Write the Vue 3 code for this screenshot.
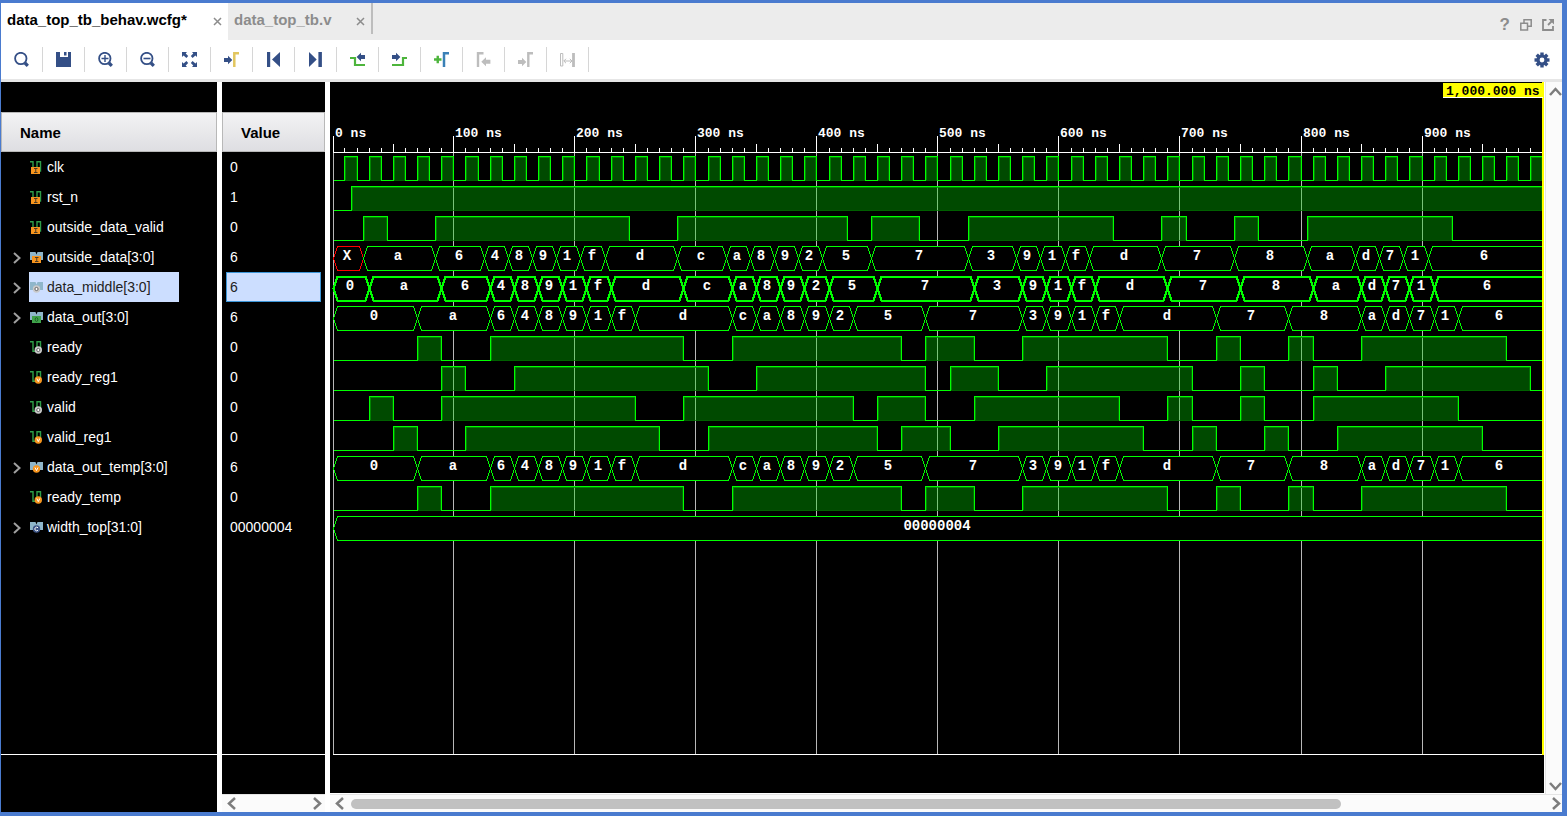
<script setup>
import { ref, computed, onMounted, onBeforeUnmount } from 'vue'

const tools = [
  { id: 'search', label: 'Find' },
  { id: 'save', label: 'Save waveform configuration' },
  { id: 'zoomin', label: 'Zoom in' },
  { id: 'zoomout', label: 'Zoom out' },
  { id: 'fit', label: 'Zoom fit' },
  { id: 'goto', label: 'Go to cursor' },
  { id: 'first', label: 'Go to time 0' },
  { id: 'last', label: 'Go to last time' },
  { id: 'prevedge', label: 'Previous transition' },
  { id: 'nextedge', label: 'Next transition' },
  { id: 'addmark', label: 'Add marker' },
  { id: 'prevmark', label: 'Previous marker', off: true },
  { id: 'nextmark', label: 'Next marker', off: true },
  { id: 'swap', label: 'Swap cursors', off: true }
]

const clk = Array.from({ length: 50 }, (_, i) => [i * 20 + 10, i * 20 + 20])
const readyPulses = [[70, 90], [130, 290], [330, 470], [490, 530], [570, 690], [730, 750], [790, 810], [850, 970]]
const outBus = [['0', 0], ['a', 70], ['6', 130], ['4', 150], ['8', 170], ['9', 190], ['1', 210], ['f', 230], ['d', 250], ['c', 330], ['a', 350], ['8', 370], ['9', 390], ['2', 410], ['5', 430], ['7', 490], ['3', 570], ['9', 590], ['1', 610], ['f', 630], ['d', 650], ['7', 730], ['8', 790], ['a', 850], ['d', 870], ['7', 890], ['1', 910], ['6', 930]]

const signals = [
  { name: 'clk', value: '0', badge: 'I', pulses: clk },
  { name: 'rst_n', value: '1', badge: 'I', pulses: [[15, 1010]] },
  { name: 'outside_data_valid', value: '0', badge: 'I', pulses: [[25, 45], [85, 245], [285, 425], [445, 485], [525, 645], [685, 705], [745, 765], [805, 925]] },
  { name: 'outside_data[3:0]', value: '6', badge: 'I', bus: [['X', 0], ['a', 25], ['6', 85], ['4', 125], ['8', 145], ['9', 165], ['1', 185], ['f', 205], ['d', 225], ['c', 285], ['a', 325], ['8', 345], ['9', 365], ['2', 385], ['5', 405], ['7', 445], ['3', 525], ['9', 565], ['1', 585], ['f', 605], ['d', 625], ['7', 685], ['8', 745], ['a', 805], ['d', 845], ['7', 865], ['1', 885], ['6', 905]] },
  { name: 'data_middle[3:0]', value: '6', badge: 'S', selected: true, bus: [['0', 0], ['a', 30], ['6', 90], ['4', 130], ['8', 150], ['9', 170], ['1', 190], ['f', 210], ['d', 230], ['c', 290], ['a', 330], ['8', 350], ['9', 370], ['2', 390], ['5', 410], ['7', 450], ['3', 530], ['9', 570], ['1', 590], ['f', 610], ['d', 630], ['7', 690], ['8', 750], ['a', 810], ['d', 850], ['7', 870], ['1', 890], ['6', 910]] },
  { name: 'data_out[3:0]', value: '6', badge: 'O', bus: outBus },
  { name: 'ready', value: '0', badge: 'S', pulses: readyPulses },
  { name: 'ready_reg1', value: '0', badge: 'V', pulses: [[90, 110], [150, 310], [350, 490], [510, 550], [590, 710], [750, 770], [810, 830], [870, 990]] },
  { name: 'valid', value: '0', badge: 'S', pulses: [[30, 50], [90, 250], [290, 430], [450, 490], [530, 650], [690, 710], [750, 770], [810, 930]] },
  { name: 'valid_reg1', value: '0', badge: 'V', pulses: [[50, 70], [110, 270], [310, 450], [470, 510], [550, 670], [710, 730], [770, 790], [830, 950]] },
  { name: 'data_out_temp[3:0]', value: '6', badge: 'V', bus: outBus },
  { name: 'ready_temp', value: '0', badge: 'V', pulses: readyPulses },
  { name: 'width_top[31:0]', value: '00000004', badge: 'C', bus: [['00000004', 0]] }
]

const canvas = ref(null)
const width = ref(1214)
const height = ref(711)
let observer
onMounted(() => {
  const measure = () => {
    width.value = canvas.value.clientWidth
    height.value = canvas.value.clientHeight
  }
  measure()
  observer = new ResizeObserver(measure)
  observer.observe(canvas.value)
})
onBeforeUnmount(() => observer.disconnect())

const endX = computed(() => width.value - 2)
const floorY = computed(() => height.value - 39)
// Column of pixels in which a time in ns falls.
const px = t => Math.min(endX.value, Math.max(3, Math.floor(2.85 + t * (width.value - 3.8) / 1000)))

const ticks = computed(() => Array.from({ length: 100 }, (_, i) => {
  const t = i * 10
  return { t, x: px(t), major: t % 100 === 0, h: t % 100 === 0 ? 16 : t % 50 === 0 ? 8 : 4 }
}))

const rows = computed(() => signals.map((s, i) => {
  const top = 74 + i * 30
  const bottom = top + 24
  if (s.pulses) {
    let d = `M3.5 ${bottom + 0.5}`
    const boxes = []
    for (const [a, b] of s.pulses) {
      const x1 = px(a), x2 = px(b)
      d += `H${x1 + 0.5}V${top + 0.5}H${x2 + 0.5}`
      if (b <= 1000) d += `V${bottom + 0.5}`
      if (b < 1000) d += `M${x2 + 0.5} ${bottom + 0.5}`
      boxes.push({ x: x1, w: x2 - x1 })
    }
    const last = s.pulses[s.pulses.length - 1][1]
    if (last < 1000) d += `H${endX.value}`
    d = d.replace(/^(M3\.5 [\d.]+)/, '$1')
    return { top, bottom, d, boxes }
  }
  const cells = s.bus.map(([v, t], k) => {
    const open = k === s.bus.length - 1
    const x1 = px(t) + 0.5
    const x2 = (open ? endX.value : px(s.bus[k + 1][1])) + 0.5
    const t1 = top + 0.5, b1 = bottom + 0.5, m = top + 12.5
    const d = open
      ? `M${x2} ${t1}H${x1 + 4}L${x1} ${m}L${x1 + 4} ${b1}H${x2}`
      : `M${x1} ${m}L${x1 + 4} ${t1}H${x2 - 4}L${x2} ${m}L${x2 - 4} ${b1}H${x1 + 4}Z`
    return { v, d, cx: Math.floor((x1 + x2) / 2) - 1, bad: v === 'X' }
  })
  return { top, bottom, cells, bold: s.selected }
}))
</script>

<template>
  <div class="window">
    <header class="tabs">
      <div class="tab active"><span>data_top_tb_behav.wcfg*</span>
        <button class="close" aria-label="Close data_top_tb_behav.wcfg"><svg width="9" height="9"><path d="M1 1l7 7M8 1L1 8" /></svg></button>
      </div>
      <div class="tab"><span>data_top_tb.v</span>
        <button class="close" aria-label="Close data_top_tb.v"><svg width="9" height="9"><path d="M1 1l7 7M8 1L1 8" /></svg></button>
      </div>
      <div class="window-tools">
        <button class="help" aria-label="Help">?</button>
        <button aria-label="Restore"><svg width="12" height="12" class="line"><path d="M4 3.5V.8h7.2v6.4H8M.8 4.2h6.7v6.9H.8z" /></svg></button>
        <button aria-label="Float"><svg width="12" height="12" class="line"><path d="M4.5 1H1v10h10V7" stroke-width="1.8" /><path d="M6 6l4-4" stroke-width="1.8" /><path d="M6.5 0H12v5.5z" fill="#8c8c8c" stroke="none" /></svg></button>
      </div>
    </header>

    <nav class="toolbar">
      <button v-for="t in tools" :key="t.id" class="tool" :aria-label="t.label" :disabled="t.off">
        <svg width="16" height="16" viewBox="0 0 16 16">
          <g v-if="t.id === 'search' || t.id === 'zoomin' || t.id === 'zoomout'">
            <circle cx="6.8" cy="6.5" r="5.7" fill="none" class="navy-s" stroke-width="1.8" />
            <path d="M11 11l2.8 2.8" class="navy-s" stroke-width="3.2" />
            <path v-if="t.id === 'zoomin'" d="M3.5 6.5h7M7 3v7" class="navy-s" stroke-width="1.4" />
            <path v-if="t.id === 'zoomout'" d="M3.5 6.5h7" class="navy-s" stroke-width="1.6" />
          </g>
          <path v-else-if="t.id === 'save'" class="navy" d="M0 0h4v5h8V0h3v15H0zM8 0h2.500v3.500H8z" />
          <path v-else-if="t.id === 'fit'" class="navy" d="M0 0h5L3.7 1.5 6.2 4 4.4 6 1.6 3.4 0 5zM15 0v5l-1.6-1.6L10.6 6 8.8 4l2.5-2.5L10 0zM0 15v-5l1.6 1.5L4.4 9l1.8 2-2.5 2.5L5 15zM15 15h-5l1.3-1.5L8.8 11l1.8-2 2.8 2.5L15 10z" />
          <g v-else-if="t.id === 'goto'">
            <path class="navy" d="M0 6h4V3.8L8.3 8 4 12.200V10H0z" />
            <path d="M10.300 15V1.200H15" fill="none" stroke="#e2c65f" stroke-width="2.500" />
          </g>
          <path v-else-if="t.id === 'first'" class="navy" d="M1 0h3.200v15H1zM14 0v15L6 7.500z" />
          <path v-else-if="t.id === 'last'" class="navy" d="M1 0l7.700 7.500L1 15zM10.400 0h3.500v15h-3.500z" />
          <g v-else-if="t.id === 'prevedge'">
            <path d="M0 6h5v7h10" fill="none" class="green-s" stroke-width="2.200" />
            <path class="navy" d="M6.600 5L11 .8V3h4v4h-4v2.200z" />
          </g>
          <g v-else-if="t.id === 'nextedge'">
            <path d="M0 13h11V6h4" fill="none" class="green-s" stroke-width="2.200" />
            <path class="navy" d="M8.400 5L4 .8V3H0v4h4v2.200z" />
          </g>
          <g v-else-if="t.id === 'addmark'">
            <path d="M0 7.500h7.500M3.750 3.800v7.400" class="green-s" stroke-width="2.400" />
            <path d="M10 15V1.200h5" fill="none" stroke="#3a80b6" stroke-width="2.500" />
          </g>
          <g v-else-if="t.id === 'prevmark'">
            <path d="M2 15V1.200h5.500" fill="none" stroke="#bdbdbd" stroke-width="2.400" />
            <path fill="#bdbdbd" d="M5.300 9.700L10 5.200v2.500h4.400v4H10v2.500z" />
          </g>
          <g v-else-if="t.id === 'nextmark'">
            <path d="M10.300 15V1.200H15" fill="none" stroke="#bdbdbd" stroke-width="2.400" />
            <path fill="#bdbdbd" d="M8.300 10L4 5.800v2.300H0v4h4v2.200z" />
          </g>
          <g v-else fill="none" stroke="#bdbdbd">
            <path d="M.5 1.500h2.300v12.500H.5z" />
            <path d="M13.500 1v14" stroke-width="2.800" />
            <path d="M4 9h8M6 6.800L3.800 9 6 11.200M9.800 6.800L12 9l-2.200 2.200" />
          </g>
        </svg>
      </button>
      <button class="settings" aria-label="Settings">
        <svg width="16" height="16" viewBox="-8 -8 16 16">
          <circle r="4" fill="none" class="navy-s" stroke-width="3.200" />
          <path v-for="a in 8" :key="a" class="navy" d="M-1.700-7.500h3.400v3h-3.400z" :transform="`rotate(${a * 45})`" />
        </svg>
      </button>
    </nav>

    <main class="body">
      <section class="pane names">
        <div class="pad"></div>
        <div class="rows">
          <table>
            <thead><tr><th>Name</th></tr></thead>
            <tbody>
              <tr v-for="s in signals" :key="s.name">
                <td>
                  <div class="cell">
                    <button v-if="s.bus" class="expand" :aria-label="'Expand ' + s.name"><svg width="8" height="12"><path d="M1 1l5.500 5L1 11" /></svg></button>
                    <span v-else class="expand"></span>
                    <span class="label" :class="{ selected: s.selected }">
                      <svg width="14" height="14" class="sig">
                        <path v-if="s.bus" fill="#8fb6ca" d="M0 2h5.500l1 2.500L7.500 2H13v8H0z" />
                        <path v-else d="M0 1.700h3v9.600h4V1.700h3.500v10" fill="none" stroke="#2f9e48" stroke-width="1.400" />
                        <g v-if="s.badge === 'I' || s.badge === 'O'" :transform="s.bus ? 'translate(1 -1)' : ''">
                          <rect x="1" y="7" width="9" height="7" :fill="s.badge === 'I' ? '#f7941d' : '#3fa34a'" />
                          <path v-if="s.badge === 'I'" d="M4 8.500h3.500M5.750 8.500v4M4 12.500h3.500" stroke="#4b3a23" />
                          <ellipse v-else cx="5.500" cy="10.500" rx="1.300" ry="2" fill="none" stroke="#1d6328" />
                        </g>
                        <g v-else :transform="s.bus ? 'translate(6.500 9)' : 'translate(8.300 10)'">
                          <circle r="3.700" :fill="s.badge === 'V' ? '#f7941d' : s.badge === 'C' ? '#3d5587' : '#c9c9c9'" />
                          <path v-if="s.badge === 'V'" d="M-1.500-1.500L0 1.600 1.500-1.500" fill="none" stroke="#fff" />
                          <path v-else-if="s.badge === 'C'" d="M1.500-1.200a1.800 1.800 0 1 0 0 2.400" fill="none" stroke="#fff" />
                          <circle v-else r="1.600" fill="#fff" stroke="#666" />
                        </g>
                      </svg>{{ s.name }}
                    </span>
                  </div>
                </td>
              </tr>
            </tbody>
          </table>
        </div>
        <div class="foot tall"></div>
      </section>

      <section class="pane values">
        <div class="pad"></div>
        <div class="rows">
          <table>
            <thead><tr><th>Value</th></tr></thead>
            <tbody>
              <tr v-for="s in signals" :key="s.name"><td><div class="value" :class="{ selected: s.selected }">{{ s.value }}</div></td></tr>
            </tbody>
          </table>
        </div>
        <div class="foot"></div>
        <div class="hbar">
          <button aria-label="Scroll values left"><svg width="9" height="13"><path d="M8 1L2 6.500 8 12" /></svg></button>
          <button class="end" aria-label="Scroll values right"><svg width="9" height="13"><path d="M1 1l6 5.500L1 12" /></svg></button>
        </div>
      </section>

      <section class="wave">
        <div class="view">
          <div ref="canvas" class="canvas">
            <svg class="plot" :width="width" :height="height">
              <path class="rule" :d="`M3 70.5H${endX}M3 ${floorY + 0.5}H${endX}`" />
              <g v-for="k in ticks" :key="k.t">
                <path v-if="k.major" class="grid" :d="`M${k.x + 0.5} 71V${floorY}`" />
                <path class="rule" :d="`M${k.x + 0.5} ${70 - k.h}V70`" />
                <text v-if="k.major" :x="k.x + 2" y="55">{{ k.t }} ns</text>
              </g>
              <g v-for="(r, i) in rows" :key="i">
                <template v-if="r.boxes">
                  <g v-for="b in r.boxes" :key="b.x">
                    <rect class="fill" :x="b.x" :y="r.top" :width="b.w" height="24" />
                    <path class="inner" :d="`M${b.x + 1.5} ${r.bottom}V${r.top + 1.5}H${b.x + b.w}`" />
                    <path class="shade" :d="`M${b.x + 1} ${r.bottom + 0.5}H${b.x + b.w}M${b.x + b.w - 0.5} ${r.top + 2}V${r.bottom}`" />
                  </g>
                  <path class="trace" :d="r.d" />
                </template>
                <template v-else>
                  <path v-for="(c, k) in r.cells" :key="k" class="bus" :class="{ bold: r.bold, bad: c.bad }" :d="c.d" />
                  <text v-for="(c, k) in r.cells" :key="'t' + k" class="data" :x="c.cx" :y="r.top + 14" text-anchor="middle">{{ c.v }}</text>
                </template>
              </g>
              <rect :x="width - 2" y="0" width="2" :height="floorY + 1" fill="#ff0" />
              <rect :x="width - 101" y="1" width="100" height="15" fill="#fff" />
              <rect :x="width - 101" y="1" width="100" height="14" fill="#ff0" />
              <text class="cursor" :x="width - 98" y="13">1,000.000 ns</text>
            </svg>
          </div>
          <div class="vbar">
            <button aria-label="Scroll up"><svg width="13" height="9"><path d="M1 8l5.500-6L12 8" /></svg></button>
            <button aria-label="Scroll down"><svg width="13" height="9"><path d="M1 1l5.500 6L12 1" /></svg></button>
          </div>
        </div>
        <div class="hbar">
          <button aria-label="Scroll waveform left"><svg width="9" height="13"><path d="M8 1L2 6.500 8 12" /></svg></button>
          <div class="track"><div class="thumb"></div></div>
          <button class="end" aria-label="Scroll waveform right"><svg width="9" height="13"><path d="M1 1l6 5.500L1 12" /></svg></button>
        </div>
      </section>
    </main>
  </div>
</template>

<style>
body { margin: 0; }
</style>

<style scoped>
* { box-sizing: border-box; }
.window {
  height: 100vh;
  min-height: 620px;
  display: flex;
  flex-direction: column;
  border: solid #4a7bcf;
  border-width: 3px 5px 4px 1px;
  background: #fff;
  font-family: "Liberation Sans", Arial, sans-serif;
  font-size: 14px;
}
button { margin: 0; padding: 0; border: 0; background: none; font: inherit; color: inherit; display: block; }
svg { display: block; }
.tabs { display: flex; height: 37px; background: #ececec; flex: none; }
.tab {
  display: flex;
  justify-content: space-between;
  align-items: flex-start;
  width: 145px;
  height: 31px;
  padding: 8px 6px 0 6px;
  border-right: 2px solid #bdbdbd;
  font-weight: bold;
  font-size: 15px;
  line-height: 18px;
  color: #8c8c8c;
}
.tab.active { width: 227px; height: 37px; background: #fff; color: #000; border-right: 0; }
.close { padding-top: 6px; }
.close svg { fill: none; stroke: #8c8c8c; stroke-width: 1.5; }
.window-tools { margin-left: auto; display: flex; align-items: center; gap: 10px; padding: 6px 8px 0 0; color: #8c8c8c; }
.help { font-size: 17px; font-weight: bold; line-height: 18px; }
.line { fill: none; stroke: #8c8c8c; stroke-width: 1.5; }
.toolbar { display: flex; flex: none; height: 42px; padding-top: 7px; border-bottom: 3px solid #e6e6e6; }
.tool { width: 42px; height: 25px; padding: 5px 12px 4px 13px; border-right: 1px solid #d6d6d6; }
.settings { margin-left: auto; padding: 0 12px 7px 0; }
.navy { fill: #344f86; }
.navy-s { stroke: #344f86; }
.green-s { stroke: #4db53c; }
.body { display: flex; flex: 1; min-height: 0; gap: 5px; }
.pane { display: flex; flex-direction: column; flex: none; color: #fff; }
.names { width: 216px; }
.values { width: 103px; }
.pad { height: 30px; background: #000; flex: none; }
.rows { flex: 1; min-height: 0; overflow: hidden; background: #000; border-bottom: 1px solid #fff; }
.foot { height: 39px; background: #000; flex: none; }
.foot.tall { height: 57px; }
table { width: 100%; border-collapse: separate; border-spacing: 0; }
th {
  height: 40px;
  padding: 0 0 0 18px;
  border: 1px solid #b8b8b8;
  background: linear-gradient(#f3f3f4, #dedee2);
  color: #000;
  text-align: left;
  font-size: 15px;
}
td { height: 30px; padding: 0; }
.cell { display: flex; align-items: center; }
.expand { width: 28px; padding: 2px 0 0 12px; flex: none; }
.expand svg { fill: none; stroke: #a0a0a0; stroke-width: 2; }
.label { display: flex; align-items: center; width: 150px; height: 30px; padding-left: 1px; white-space: nowrap; }
.sig { margin-right: 3px; flex: none; }
.label.selected { background: #ccdeff; color: #222; }
.value { height: 30px; margin: 0 4px; padding-left: 3px; line-height: 28px; border: 1px solid transparent; }
.value.selected { background: #ccdeff; color: #222; border-color: #3c96d8; }
.hbar { display: flex; align-items: center; height: 18px; flex: none; background: #fbfbfb; border-top: 1px solid #e4e4e4; padding: 0 3px 0 5px; }
.hbar svg, .vbar svg { fill: none; stroke: #7d7d7d; stroke-width: 2.5; }
.hbar .end { margin-left: auto; }
.track { flex: 1; margin: 0 8px 0 7px; }
.thumb { width: 83%; height: 10px; border-radius: 5px; background: #c1c1c1; }
.wave { flex: 1; min-width: 0; display: flex; flex-direction: column; }
.wave .hbar { padding-right: 1px; }
.view { flex: 1; min-height: 0; display: flex; gap: 1px; }
.canvas { flex: 1; min-width: 0; overflow: hidden; background: #000; margin-bottom: 1px; }
.vbar { width: 17px; display: flex; flex-direction: column; justify-content: space-between; align-items: center; padding: 5px 0 3px 2px; background: #fbfbfb; border-left: 1px solid #e4e4e4; }
.plot path, .plot rect { shape-rendering: crispEdges; }
.plot text { font: bold 13px "Liberation Mono", "Courier New", monospace; fill: #fff; }
.plot .data { font-size: 14px; }
.plot .cursor { fill: #000; }
.rule { stroke: #fff; fill: none; }
.grid { stroke: #b8b8b8; }
.fill { fill: #00d800; fill-opacity: .34; }
.inner { fill: none; stroke: #009400; stroke-opacity: .8; }
.shade { fill: none; stroke: #007800; stroke-opacity: .8; }
.trace { fill: none; stroke: #0f0; }
.bus { fill: #000; stroke: #0f0; }
.bus.bold { stroke-width: 2; }
.bus.bad { stroke: #f00; }
</style>
